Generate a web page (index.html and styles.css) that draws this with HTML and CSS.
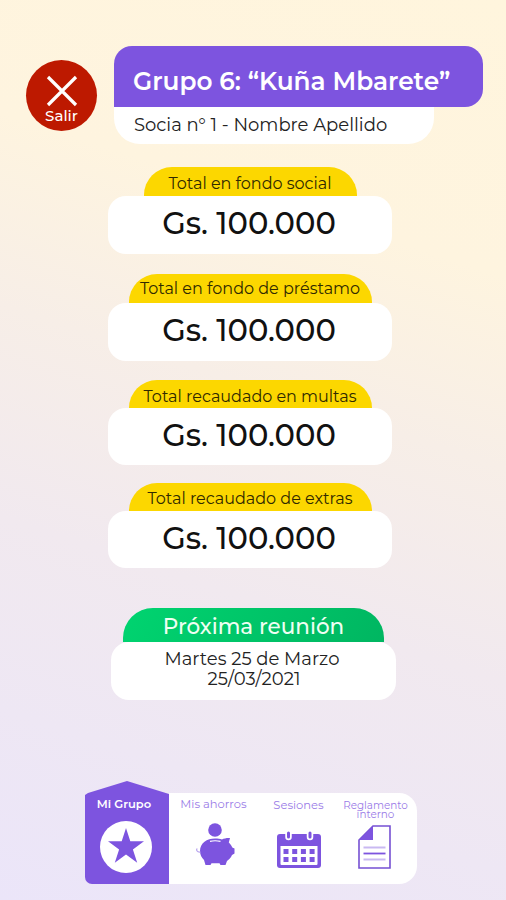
FILE: index.html
```html
<!DOCTYPE html>
<html lang="es">
<head>
<meta charset="utf-8">
<meta name="viewport" content="width=device-width">
<title>Mi Grupo</title>
<link rel="stylesheet" href="styles.css">
</head>
<body>
<div class="screen">
  <header class="header">
    <button class="exit">
      <svg class="exit-icon" viewBox="0 0 32 32"><path d="M2 2L30 30M30 2L2 30"/></svg>
      <span class="exit-label">Salir</span>
    </button>
    <div class="group">
      <h1 class="group-name"><span>Grupo 6: “Kuña Mbarete”</span></h1>
      <p class="member"><span>Socia n° 1 - Nombre Apellido</span></p>
    </div>
  </header>
  <main class="cards">
    <section class="card social"><h2 class="tab"><span>Total en fondo social</span></h2><p class="amount"><span>Gs. 100.000</span></p></section>
    <section class="card loan"><h2 class="tab"><span>Total en fondo de préstamo</span></h2><p class="amount"><span>Gs. 100.000</span></p></section>
    <section class="card fines"><h2 class="tab"><span>Total recaudado en multas</span></h2><p class="amount"><span>Gs. 100.000</span></p></section>
    <section class="card extras"><h2 class="tab"><span>Total recaudado de extras</span></h2><p class="amount"><span>Gs. 100.000</span></p></section>
    <section class="card meeting"><h2 class="tab"><span>Próxima reunión</span></h2><p class="date"><span class="day">Martes 25 de Marzo</span><span class="numeric">25/03/2021</span></p></section>
  </main>
  <nav class="nav">
    <a class="item active"><span class="label">Mi Grupo</span>
      <svg class="star" viewBox="0 0 52 52"><circle cx="26" cy="26" r="26"/><path d="M26 7l4.300 13.300H44L32.900 28.500l4.300 13.300L26 33.600l-11.200 8.200 4.300-13.300L8 20.300h13.700z"/></svg></a>
    <a class="item savings"><span class="label">Mis ahorros</span>
      <svg class="pig" viewBox="0 0 40 44"><circle cx="19" cy="7" r="6.800"/><path d="M4 28C4 20 11 15.500 19 15.500c3 0 5 .3 7 1C28 15.300 31 14.800 34 15l-1.200 4.500c1.700 1.500 2.800 3.200 3.500 5L38.500 25.500v5L36 32c-1.200 2.700-2.900 4.600-5 6L29.500 42h-5l-1-1.700h-8L14.500 42h-5L8 37C5.500 34.700 4 31.500 4 28z"/><path class="slot" d="M14 18.300Q19 17.200 24.500 18.300"/><path class="tail" d="M4.500 29C1 29.500 0 27 1.200 25.500"/></svg></a>
    <a class="item sessions"><span class="label">Sesiones</span>
      <svg class="calendar" viewBox="0 0 44 38"><path d="M3 4h38q3 0 3 3v28q0 3-3 3H3q-3 0-3-3V7q0-3 3-3z"/><path class="paper" d="M3.500 16h37v18q0 1-1 1h-35q-1 0-1-1z"/><path class="days" d="M6.500 19h5v5h-5zm8.700 0h5v5h-5zm8.700 0h5v5h-5zm8.700 0h5v5h-5zM6.500 27h5v5h-5zm8.700 0h5v5h-5zm8.700 0h5v5h-5zm8.700 0h5v5h-5z"/><path class="ring-edge" d="M11.500 3v4M33 3v4"/><path class="ring" d="M11.500 3v4M33 3v4"/></svg></a>
    <a class="item rules"><span class="label">Reglamento<br>interno</span>
      <svg class="document" viewBox="0 0 33 44"><path class="sheet" d="M15 1h17v42H1V15z"/><path d="M15 1v14H1z"/><path class="line soft" d="M5.500 22.500h22M5.500 34.500h22"/><path class="line" d="M5.500 28.500h22"/></svg></a>
  </nav>
</div>
</body>
</html>
```
FILE: styles.css
```css
* { box-sizing: border-box; }
body { margin: 0; font-family: Montserrat, Inter, sans-serif; }
h1, h2, p { margin: 0; font-weight: 400; }
.screen {
  width: 506px; height: 900px; padding-top: 46px; overflow: hidden;
  display: flex; flex-direction: column;
  background: linear-gradient(198deg, #fff5dd 0%, #fef4df 26%, #f7eee7 44%, #f1e9ef 64%, #ebe5f9 100%);
}
.header { display: flex; height: 98px; padding-left: 26px; gap: 17px; }
.exit {
  width: 71px; height: 71px; margin-top: 14px; padding: 15px 0 0; border: 0; border-radius: 50%;
  background: #bd1900; color: #fff; font-family: inherit;
  display: flex; flex-direction: column; align-items: center;
}
.exit-icon { width: 32px; height: 32px; flex: none; fill: none; stroke: #fff; stroke-width: 3.2; }
.exit-label { font-size: 15px; line-height: 18px; font-weight: 500; white-space: nowrap; }
.group { width: 369px; }
.group-name {
  height: 61px; padding: 1px 0 0 19px; border-radius: 18px 18px 18px 0; background: #7d54df; color: #fff;
  font-size: 24.8px; line-height: 68px; font-weight: 600; white-space: nowrap;
}
.member {
  width: 320px; height: 37px; padding-left: 20px; border-radius: 0 0 26px 26px; background: #fff;
  color: #222; font-size: 18px; line-height: 36px; white-space: nowrap;
}
.cards { display: flex; flex-direction: column; }
.card { width: 284px; margin-left: 108px; display: flex; flex-direction: column; align-items: center; }
.tab {
  width: 243px; height: 29px; border-radius: 28px 28px 0 0; background: #fcd700; color: #302900;
  font-size: 16px; line-height: 32px; text-align: center; white-space: nowrap;
}
.amount {
  width: 284px; height: 58px; padding-right: 2px; border-radius: 18px; background: #fff; color: #111;
  font-size: 30.6px; line-height: 55px; font-weight: 500; text-align: center; white-space: nowrap;
}
.social { margin-top: 23px; }
.social .tab { width: 213px; line-height: 33px; }
.loan { margin-top: 20px; }
.loan .tab { line-height: 29px; }
.fines { margin-top: 19px; }
.fines .tab, .extras .tab { height: 28px; }
.fines .tab { line-height: 33px; }
.extras { margin-top: 18px; }
.fines .amount, .extras .amount { height: 57px; }
.meeting { width: 285px; margin: 40px 0 0 111px; }
.meeting .tab {
  width: 261px; height: 34px; border-radius: 30px 30px 0 0; color: #effff3;
  background: linear-gradient(120deg, #00d470, #00b661); font-size: 21.5px; line-height: 37px; font-weight: 500;
}
.date {
  width: 285px; height: 58px; padding: 7px 3px 0 0; border-radius: 18px; background: #fff; color: #222;
  font-size: 18px; line-height: 20px; text-align: center;
}
.date span { display: block; }
.numeric { padding-left: 4px; }
.nav {
  width: 332px; height: 103px; margin: 81px 0 0 85px;
  display: grid; grid-template-columns: 84px 90px 79px 79px; align-items: end;
}
.item { height: 91px; background: #fff; color: #9a7be7; fill: #7d54df; display: flex; flex-direction: column; align-items: center; }
.label { height: 30px; padding-top: 4px; font-size: 11.5px; line-height: 14px; white-space: nowrap; text-align: center; }
.active {
  height: 103px; background: #7d54df; color: #fff; border-radius: 6px 0 0 7px;
  clip-path: polygon(0 14px, 3px 12px, 42px 0, 100% 13px, 100% 100%, 0 100%);
}
.active .label { height: 40px; padding-top: 16px; margin-right: 6px; font-size: 11.5px; font-weight: 600; }
.star { width: 52px; height: 52px; margin-right: 2px; }
.star circle { fill: #fff; }
.savings .label { margin-right: 1px; }
.pig { width: 40px; height: 44px; margin-left: 3px; }
.slot { fill: none; stroke: #fff; stroke-width: 1.2; }
.tail { fill: none; stroke: #b5a0ed; stroke-width: 1.2; }
.sessions .label { height: 37px; padding-top: 5px; }
.calendar { width: 44px; height: 38px; }
.paper { fill: #fff; }
.ring-edge { stroke: #fff; stroke-width: 6.5; stroke-linecap: round; }
.ring { stroke: #7d54df; stroke-width: 3; stroke-linecap: round; }
.rules { border-radius: 0 18px 18px 0; }
.rules .label { height: 32px; padding: 8px 4px 0 0; line-height: 9px; font-size: 10.4px; }
.document { width: 33px; height: 44px; margin-right: 6px; }
.sheet { fill: #fff; stroke: #7650d3; stroke-width: 1.6; }
.line { fill: none; stroke: #7d54df; stroke-width: 1.8; }
.soft { stroke: #c9b9f2; }
```
